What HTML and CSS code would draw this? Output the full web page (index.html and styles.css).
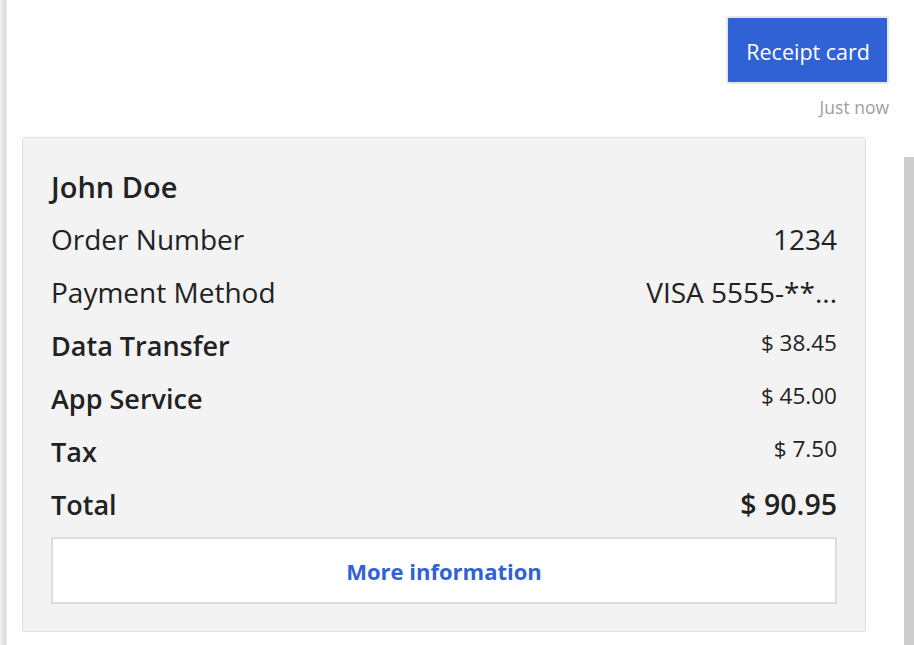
FILE: index.html
```html
<!DOCTYPE html>
<html lang="en">
<head>
<meta charset="utf-8">
<title>Receipt card</title>
<link rel="stylesheet" href="styles.css">
</head>
<body>
<div class="page">
  <div class="edge"></div>
  <main class="chat">
    <div class="user-msg">
      <div class="bubble">Receipt card</div>
      <div class="time">Just now</div>
    </div>
    <section class="card">
      <div class="row"><span class="title">John Doe</span></div>
      <div class="row"><span class="label">Order Number</span><span class="value">1234</span></div>
      <div class="row"><span class="label">Payment Method</span><span class="value">VISA 5555-**...</span></div>
      <div class="row"><span class="label strong">Data Transfer</span><span class="price">$ 38.45</span></div>
      <div class="row"><span class="label strong">App Service</span><span class="price">$ 45.00</span></div>
      <div class="row"><span class="label strong">Tax</span><span class="price">$ 7.50</span></div>
      <div class="row"><span class="label strong">Total</span><span class="value total">$ 90.95</span></div>
      <button class="more" type="button">More information</button>
    </section>
  </main>
  <div class="scroll"><div class="thumb"></div></div>
</div>
</body>
</html>
```

FILE: styles.css
```css
html, body {
  margin: 0;
  padding: 0;
  background: #ffffff;
  height: 100%;
  overflow: hidden;
}
body {
  font-family: "Open Sans", "Noto Sans", sans-serif;
  color: #222222;
}
.page {
  display: grid;
  grid-template-columns: 7px 1fr 10px;
  height: 645px;
}
.edge {
  background: linear-gradient(to right, #f2f2f2, #dcdcdc 60%, #e6e6e6);
}
.chat {
  padding: 16px 15px 0 15px;
  min-width: 0;
}
.user-msg {
  display: flex;
  flex-direction: column;
  align-items: flex-end;
}
.bubble {
  background: #3062d6;
  border: 2px solid #e6e6e6;
  border-radius: 3px;
  color: #ffffff;
  font-size: 21.5px;
  line-height: 32px;
  padding: 18px 17px 14px 18px;
}
.time {
  font-size: 17.5px;
  line-height: 24px;
  color: #9e9e9e;
  margin-top: 11px;
}
.card {
  margin-top: 18px;
  margin-right: 23px;
  background: #f3f3f3;
  border: 1px solid #e0e0e0;
  border-radius: 2px;
  padding: 30px 28px 27px 28px;
  display: flex;
  flex-direction: column;
  gap: 16px;
}
.row {
  display: flex;
  justify-content: space-between;
  align-items: flex-start;
  height: 37px;
}
.title, .label, .value {
  font-size: 28px;
  line-height: 37px;
  white-space: nowrap;
}
.title {
  font-size: 29px;
  font-weight: 600;
}
.label.strong {
  font-size: 27px;
  font-weight: 600;
}
.value.total {
  font-size: 28.5px;
  font-weight: 600;
}
.price {
  font-size: 22.5px;
  line-height: 31px;
  white-space: nowrap;
}
.more {
  margin-top: -2px;
  height: 67px;
  background: #ffffff;
  border: 2px solid #dddddd;
  font-family: inherit;
  font-size: 22px;
  font-weight: 700;
  color: #3062d6;
  cursor: pointer;
  padding: 0;
}
.scroll {
  padding-top: 157px;
}
.thumb {
  background: #cdcdcd;
  height: 100%;
}
```
